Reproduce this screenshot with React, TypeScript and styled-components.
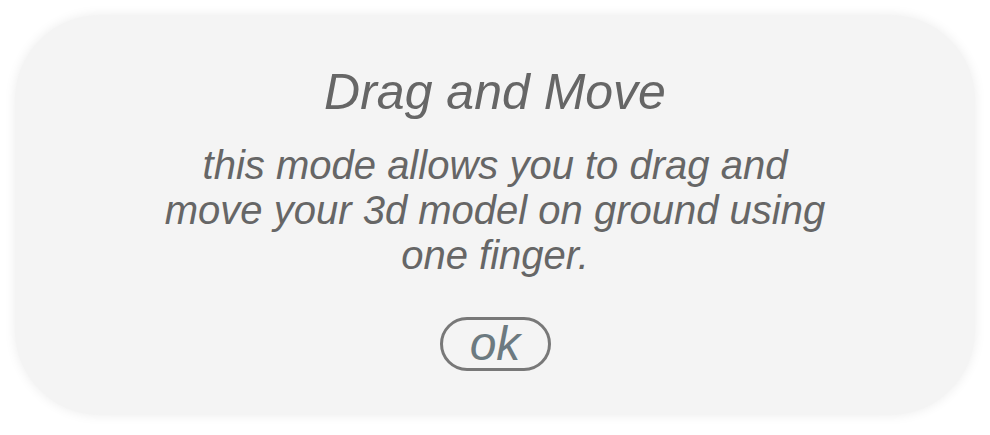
import styled, { createGlobalStyle } from 'styled-components';

const GlobalStyle = createGlobalStyle`
  html, body {
    margin: 0;
    padding: 0;
    background-color: #ffffff;
  }
`;

const Page = styled.div`
  padding: 15px;
  box-sizing: border-box;
  width: 990px;
  height: 435px;
`;

const Card = styled.div`
  background-color: #f4f4f4;
  border-radius: 85px;
  box-shadow: 0 0 12px rgba(0, 0, 0, 0.08);
  height: 400px;
  display: flex;
  flex-direction: column;
  align-items: center;
  padding-top: 49px;
  box-sizing: border-box;
  font-family: 'Liberation Sans', Arial, sans-serif;
  font-style: italic;
  color: #666666;
  text-align: center;
`;

const Title = styled.h1`
  margin: 0;
  font-size: 50px;
  font-weight: normal;
  line-height: 56px;
`;

const Message = styled.p`
  margin: 23px 0 0;
  font-size: 40px;
  line-height: 45px;
  width: 675px;
`;

const OkButton = styled.button`
  margin-top: 39px;
  width: 111px;
  height: 54px;
  border: 3px solid #787878;
  border-radius: 27px;
  background: transparent;
  font-family: inherit;
  font-style: italic;
  font-size: 48px;
  line-height: 48px;
  color: #6c7a80;
  padding: 0;
  cursor: pointer;
`;

function App() {
  return (
    <>
      <GlobalStyle />
      <Page>
        <Card>
          <Title>Drag and Move</Title>
          <Message>
            this mode allows you to drag and move your 3d model on ground using one finger.
          </Message>
          <OkButton>ok</OkButton>
        </Card>
      </Page>
    </>
  );
}

export default App;
